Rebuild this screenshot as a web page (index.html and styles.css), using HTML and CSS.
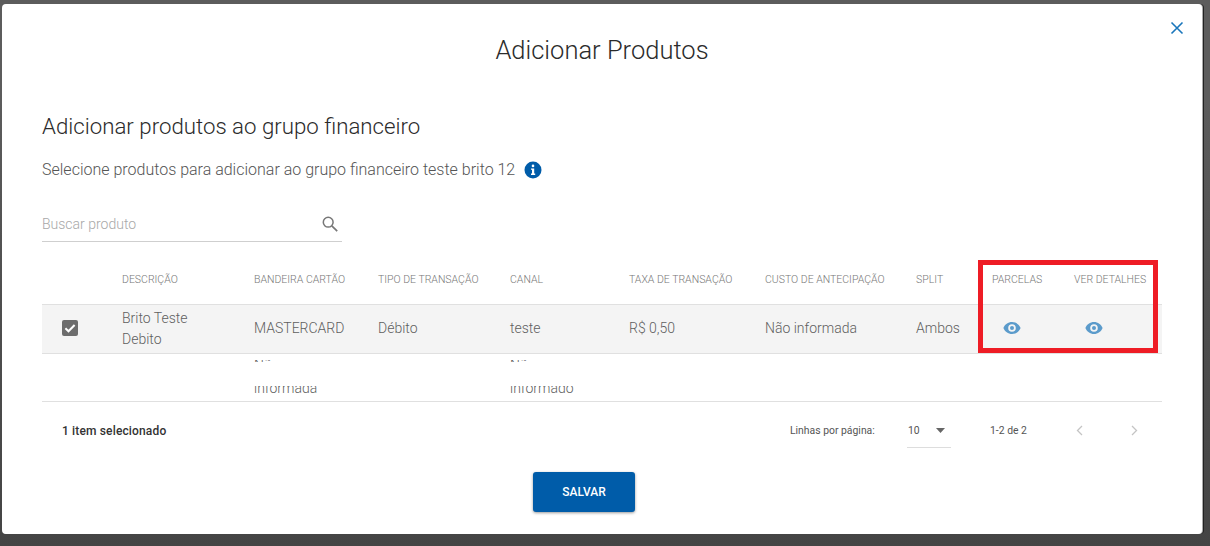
FILE: index.html
```html
<!DOCTYPE html>
<html lang="pt-BR">
<head>
    <meta charset="UTF-8">
    <meta name="viewport" content="width=device-width, initial-scale=1.0">
    <title>Adicionar Produtos</title>
    <link rel="stylesheet" href="styles.css">
</head>
<body>
    <div class="modal">
        <button class="modal__close" type="button" aria-label="Fechar">
            <svg width="14" height="14" viewBox="0 0 14 14"><path d="M1.5 1.5l11 11M12.5 1.5l-11 11" fill="none" stroke="#1a76bb" stroke-width="1.6"/></svg>
        </button>

        <h1 class="modal__title">Adicionar Produtos</h1>
        <h2 class="modal__subtitle">Adicionar produtos ao grupo financeiro</h2>

        <p class="modal__text">
            Selecione produtos para adicionar ao grupo financeiro teste brito 12
            <svg class="modal__info" width="18" height="18" viewBox="0 0 18 18">
                <circle cx="9" cy="9" r="8.5" fill="#005ca9"/>
                <rect x="7.7" y="3.6" width="2.6" height="2.6" rx="1.3" fill="#fff"/>
                <path d="M7 7.4h3.2v5.2h1v1.4H7v-1.4h1V8.8H7z" fill="#fff"/>
            </svg>
        </p>

        <div class="search">
            <span class="search__label">Buscar produto</span>
            <svg width="18" height="18" viewBox="0 0 18 18"><circle cx="7.2" cy="7.2" r="4.9" fill="none" stroke="#777" stroke-width="1.5"/><path d="M10.8 10.8l5.4 5.4" stroke="#777" stroke-width="1.7"/></svg>
        </div>

        <div class="table">
            <div class="table__row table__row--head">
                <span></span>
                <span>DESCRIÇÃO</span>
                <span>BANDEIRA CARTÃO</span>
                <span>TIPO DE TRANSAÇÃO</span>
                <span>CANAL</span>
                <span>TAXA DE TRANSAÇÃO</span>
                <span>CUSTO DE ANTECIPAÇÃO</span>
                <span>SPLIT</span>
                <span>PARCELAS</span>
                <span>VER DETALHES</span>
            </div>

            <div class="table__row table__row--selected">
                <svg class="table__check" width="16" height="16" viewBox="0 0 16 16">
                    <rect width="16" height="16" rx="2" fill="#6d6d6d"/>
                    <path d="M3.4 8.2l3.1 3.1 6.1-6.3" fill="none" stroke="#fff" stroke-width="2"/>
                </svg>
                <span class="table__name">Brito Teste<br>Debito</span>
                <span>MASTERCARD</span>
                <span>Débito</span>
                <span>teste</span>
                <span>R$ 0,50</span>
                <span>Não informada</span>
                <span>Ambos</span>
                <svg class="table__eye" width="18" height="12" viewBox="0 0 18 12"><path fill-rule="evenodd" d="M9 0c3.9 0 7.2 2.4 8.6 6-1.4 3.6-4.7 6-8.600 6S1.800 9.600.4 6C1.800 2.400 5.100 0 9 0zm0 2.200a3.800 3.800 0 1 0 0 7.600 3.800 3.800 0 0 0 0-7.600zM9 4a2 2 0 1 1 0 4 2 2 0 0 1 0-4z" fill="#5b9bcb"/></svg>
                <svg class="table__eye" width="18" height="12" viewBox="0 0 18 12"><path fill-rule="evenodd" d="M9 0c3.9 0 7.2 2.4 8.6 6-1.4 3.6-4.7 6-8.600 6S1.800 9.600.4 6C1.800 2.400 5.100 0 9 0zm0 2.200a3.800 3.800 0 1 0 0 7.600 3.800 3.800 0 0 0 0-7.600zM9 4a2 2 0 1 1 0 4 2 2 0 0 1 0-4z" fill="#5b9bcb"/></svg>
            </div>

            <div class="table__row table__row--cut">
                <span></span>
                <span></span>
                <span class="table__cut"><i class="table__cut-top">Não</i><i class="table__cut-bottom">informada</i></span>
                <span></span>
                <span class="table__cut"><i class="table__cut-top">Não</i><i class="table__cut-bottom">informado</i></span>
            </div>
        </div>

        <div class="footer">
            <strong class="footer__count">1 item selecionado</strong>
            <span class="footer__label">Linhas por página:</span>
            <span class="footer__select">10<svg width="9" height="5" viewBox="0 0 9 5"><path d="M0 0h9L4.500 5z" fill="#666"/></svg></span>
            <span class="footer__range">1-2 de 2</span>
            <svg class="footer__prev" width="7" height="11" viewBox="0 0 7 11"><path d="M6 1L1.500 5.500 6 10" fill="none" stroke="#c4c4c4" stroke-width="1.300"/></svg>
            <svg class="footer__next" width="7" height="11" viewBox="0 0 7 11"><path d="M1 1l4.500 4.500L1 10" fill="none" stroke="#c4c4c4" stroke-width="1.300"/></svg>
        </div>

        <div class="actions">
            <button class="actions__save" type="button">SALVAR</button>
        </div>

        <div class="highlight"></div>
    </div>
</body>
</html>
```
FILE: styles.css
```css
html, body{
    height: 100%;
}

body{
    margin: 0;
    padding: 4px 0 0 2px;
    box-sizing: border-box;
    overflow: hidden;
    background: linear-gradient(#5c5c5c 0, #5c5c5c 100px, #4f4f4f 300px, #444 100%);
    font-family: Roboto, "Liberation Sans", sans-serif;
    font-weight: 300;
    color: #333;
}

.modal{
    position: relative;
    width: 1200px;
    height: 530px;
    padding: 0 40px;
    box-sizing: border-box;
    background: #fff;
    border-radius: 4px;
    box-shadow: 1px 0 0 #aaa, 2px 0 0 #222;
}

.modal__close{
    position: absolute;
    top: 17px;
    right: 18px;
    padding: 0;
    border: 0;
    background: none;
    line-height: 0;
}

.modal__title{
    margin: 0;
    padding-top: 30px;
    font-size: 25.5px;
    line-height: 32px;
    font-weight: 300;
    text-align: center;
    color: #2b2b2b;
}

.modal__subtitle{
    margin: 46px 0 0;
    font-size: 22.25px;
    line-height: 28px;
    font-weight: 300;
    color: #2b2b2b;
}

.modal__text{
    display: flex;
    align-items: center;
    gap: 9px;
    margin: 18px 0 0;
    font-size: 16px;
    line-height: 24px;
    color: #555;
}

.search{
    display: flex;
    align-items: center;
    justify-content: space-between;
    width: 300px;
    height: 37px;
    margin-top: 23px;
    padding: 2px 3px 0 0;
    box-sizing: border-box;
    border-bottom: 1px solid #cfcfcf;
    font-size: 14px;
    color: #a8a8a8;
}

.table{
    margin-top: 15px;
    border-bottom: 1px solid #e0e0e0;
}

.table__row{
    display: grid;
    grid-template-columns: 60px 132px 124px 132px 119px 136px 151px 76px 82px auto;
    align-items: center;
    padding-left: 20px;
}

.table__row--head{
    height: 48px;
    box-sizing: border-box;
    padding-bottom: 3px;
    font-size: 10.5px;
    color: #777;
    border-bottom: 1px solid #e0e0e0;
}

.table__row--selected{
    height: 49px;
    box-sizing: border-box;
    padding-bottom: 2px;
    background: #f4f4f4;
    border-bottom: 1px solid #e0e0e0;
    font-size: 14px;
    color: #5f5f5f;
}

.table__name{
    margin-top: 2px;
    line-height: 21px;
}

.table__eye{
    margin-left: 11px;
}

.table__row--cut{
    height: 47px;
    font-size: 14px;
    color: #5f5f5f;
}

.table__cut{
    display: flex;
    flex-direction: column;
    justify-content: space-between;
    height: 47px;
    padding: 6px 0 8px;
    box-sizing: border-box;
}

.table__cut-top,
.table__cut-bottom{
    display: block;
    font-style: normal;
    overflow: hidden;
}

.table__cut-top{
    height: 2px;
    line-height: 10px;
}

.table__cut-bottom{
    height: 7px;
    line-height: 4px;
}

.footer{
    display: grid;
    grid-template-columns: 728px 117px 83px 86px 55px auto;
    align-items: center;
    height: 57px;
    padding-left: 20px;
    font-size: 10.4px;
    color: #555;
    font-weight: 400;
}

.footer__count{
    font-size: 12px;
    font-weight: 500;
    letter-spacing: .15px;
    color: #333;
}

.footer__select{
    display: flex;
    align-items: center;
    gap: 16px;
    width: 44px;
    height: 34px;
    padding-left: 1px;
    box-sizing: border-box;
    border-bottom: 1px solid #ddd;
}

.actions{
    display: flex;
    justify-content: center;
    margin-top: 13px;
    padding-right: 36px;
}

.actions__save{
    width: 102px;
    height: 40px;
    border: 0;
    border-radius: 3px;
    background: #005ca9;
    box-shadow: 0 1px 3px rgba(0,0,0,.4);
    color: #fff;
    font: 500 12px Roboto, "Liberation Sans", sans-serif;
}

.highlight{
    position: absolute;
    left: 976px;
    top: 256px;
    width: 170px;
    height: 83px;
    border: 5px solid #ee1c25;
    pointer-events: none;
}
```
